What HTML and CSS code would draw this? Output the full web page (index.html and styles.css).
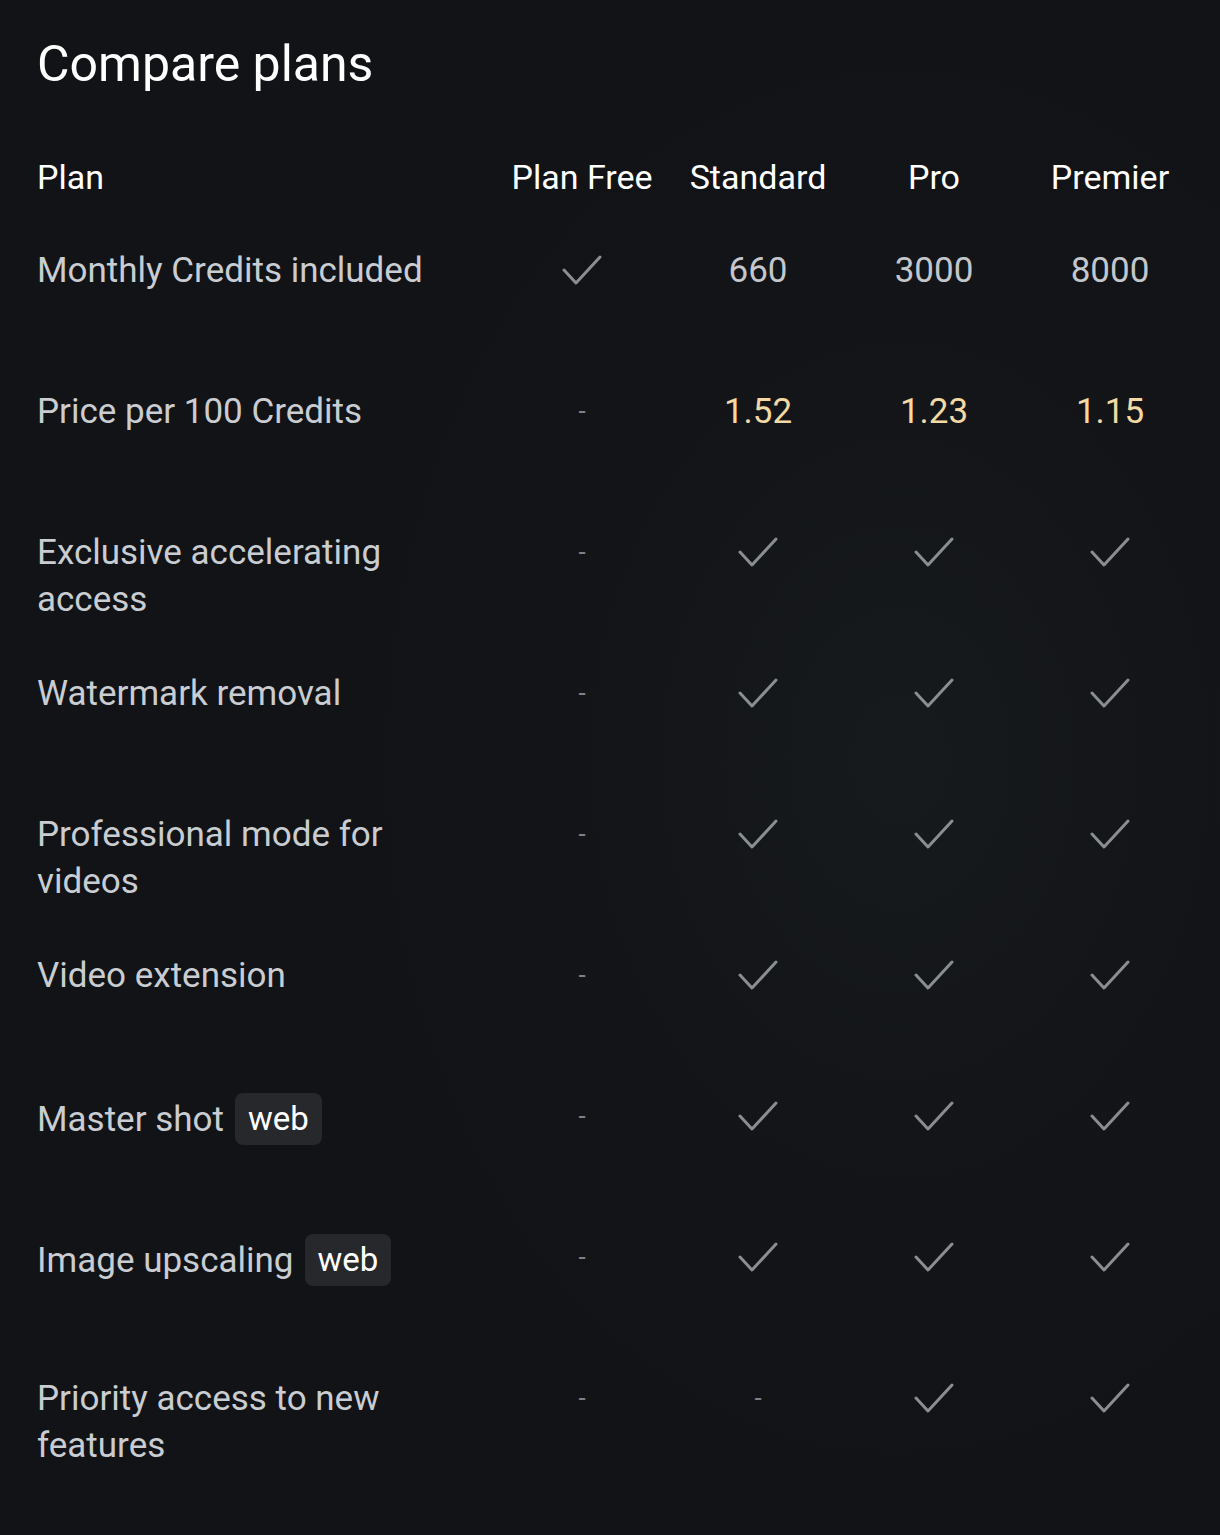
FILE: index.html
```html
<!DOCTYPE html>
<html lang="en">
<head>
<meta charset="utf-8">
<title>Compare plans</title>
<link rel="stylesheet" href="styles.css">
</head>
<body>
<main class="page">
  <h1 class="title">Compare plans</h1>
  <div class="table">
    <div class="row head">
      <div class="feat">Plan</div>
      <div class="cell">Plan Free</div>
      <div class="cell">Standard</div>
      <div class="cell">Pro</div>
      <div class="cell">Premier</div>
    </div>

    <div class="row">
      <div class="feat"><span class="label">Monthly Credits included</span></div>
      <div class="cell"><svg class="check" viewBox="0 0 40 32"><path d="M2 15 L14 28 L38 2"/></svg></div>
      <div class="cell num">660</div>
      <div class="cell num">3000</div>
      <div class="cell num">8000</div>
    </div>

    <div class="row">
      <div class="feat"><span class="label">Price per 100 Credits</span></div>
      <div class="cell"><span class="dash">-</span></div>
      <div class="cell price">1.52</div>
      <div class="cell price">1.23</div>
      <div class="cell price">1.15</div>
    </div>

    <div class="row">
      <div class="feat"><span class="label">Exclusive accelerating access</span></div>
      <div class="cell"><span class="dash">-</span></div>
      <div class="cell"><svg class="check" viewBox="0 0 40 32"><path d="M2 15 L14 28 L38 2"/></svg></div>
      <div class="cell"><svg class="check" viewBox="0 0 40 32"><path d="M2 15 L14 28 L38 2"/></svg></div>
      <div class="cell"><svg class="check" viewBox="0 0 40 32"><path d="M2 15 L14 28 L38 2"/></svg></div>
    </div>

    <div class="row">
      <div class="feat"><span class="label">Watermark removal</span></div>
      <div class="cell"><span class="dash">-</span></div>
      <div class="cell"><svg class="check" viewBox="0 0 40 32"><path d="M2 15 L14 28 L38 2"/></svg></div>
      <div class="cell"><svg class="check" viewBox="0 0 40 32"><path d="M2 15 L14 28 L38 2"/></svg></div>
      <div class="cell"><svg class="check" viewBox="0 0 40 32"><path d="M2 15 L14 28 L38 2"/></svg></div>
    </div>

    <div class="row">
      <div class="feat"><span class="label">Professional mode for videos</span></div>
      <div class="cell"><span class="dash">-</span></div>
      <div class="cell"><svg class="check" viewBox="0 0 40 32"><path d="M2 15 L14 28 L38 2"/></svg></div>
      <div class="cell"><svg class="check" viewBox="0 0 40 32"><path d="M2 15 L14 28 L38 2"/></svg></div>
      <div class="cell"><svg class="check" viewBox="0 0 40 32"><path d="M2 15 L14 28 L38 2"/></svg></div>
    </div>

    <div class="row">
      <div class="feat"><span class="label">Video extension</span></div>
      <div class="cell"><span class="dash">-</span></div>
      <div class="cell"><svg class="check" viewBox="0 0 40 32"><path d="M2 15 L14 28 L38 2"/></svg></div>
      <div class="cell"><svg class="check" viewBox="0 0 40 32"><path d="M2 15 L14 28 L38 2"/></svg></div>
      <div class="cell"><svg class="check" viewBox="0 0 40 32"><path d="M2 15 L14 28 L38 2"/></svg></div>
    </div>

    <div class="row">
      <div class="feat"><span class="label">Master shot</span><span class="badge">web</span></div>
      <div class="cell"><span class="dash">-</span></div>
      <div class="cell"><svg class="check" viewBox="0 0 40 32"><path d="M2 15 L14 28 L38 2"/></svg></div>
      <div class="cell"><svg class="check" viewBox="0 0 40 32"><path d="M2 15 L14 28 L38 2"/></svg></div>
      <div class="cell"><svg class="check" viewBox="0 0 40 32"><path d="M2 15 L14 28 L38 2"/></svg></div>
    </div>

    <div class="row">
      <div class="feat"><span class="label">Image upscaling</span><span class="badge">web</span></div>
      <div class="cell"><span class="dash">-</span></div>
      <div class="cell"><svg class="check" viewBox="0 0 40 32"><path d="M2 15 L14 28 L38 2"/></svg></div>
      <div class="cell"><svg class="check" viewBox="0 0 40 32"><path d="M2 15 L14 28 L38 2"/></svg></div>
      <div class="cell"><svg class="check" viewBox="0 0 40 32"><path d="M2 15 L14 28 L38 2"/></svg></div>
    </div>

    <div class="row">
      <div class="feat"><span class="label">Priority access to new features</span></div>
      <div class="cell"><span class="dash">-</span></div>
      <div class="cell"><span class="dash">-</span></div>
      <div class="cell"><svg class="check" viewBox="0 0 40 32"><path d="M2 15 L14 28 L38 2"/></svg></div>
      <div class="cell"><svg class="check" viewBox="0 0 40 32"><path d="M2 15 L14 28 L38 2"/></svg></div>
    </div>
  </div>
</main>
</body>
</html>
```

FILE: styles.css
```css
html, body {
  margin: 0;
  padding: 0;
}
body {
  width: 1220px;
  min-height: 1535px;
  background-color: #111316;
  background-image: radial-gradient(ellipse 520px 700px at 900px 760px, #171a1d 0%, #131518 55%, rgba(17,19,22,0) 100%);
  font-family: Roboto, "Noto Sans", "Liberation Sans", sans-serif;
  color: #c9cdd1;
}
.page {
  padding: 32px 22px 0 37px;
}
.title {
  margin: 0;
  font-size: 50px;
  line-height: 64px;
  font-weight: 400;
  color: #ffffff;
}
.table {
  margin-top: 58px;
  display: flex;
  flex-direction: column;
}
.row {
  display: grid;
  grid-template-columns: 457px repeat(4, 176px);
  height: 141px;
  align-items: start;
}
.row.head {
  height: 93px;
}
.feat {
  font-size: 35px;
  line-height: 47px;
  padding-right: 37px;
  display: flex;
  align-items: center;
  flex-wrap: wrap;
}
.head .feat,
.head .cell {
  color: #ffffff;
  font-size: 34px;
}
.cell {
  height: 47px;
  display: flex;
  align-items: center;
  justify-content: center;
  font-size: 35px;
  line-height: 47px;
  white-space: nowrap;
}
.num {
  color: #c3c7cb;
}
.price {
  color: #f3d9a4;
}
.dash {
  color: #7e8287;
  font-size: 26px;
}
.check {
  width: 40px;
  height: 32px;
  fill: none;
  stroke: #8a8e92;
  stroke-width: 3;
  stroke-linecap: round;
  stroke-linejoin: round;
}
.badge {
  margin-left: 11px;
  background: #26282b;
  color: #ffffff;
  border-radius: 8px;
  padding: 0 13px;
  height: 52px;
  line-height: 52px;
  font-size: 33px;
}
```
